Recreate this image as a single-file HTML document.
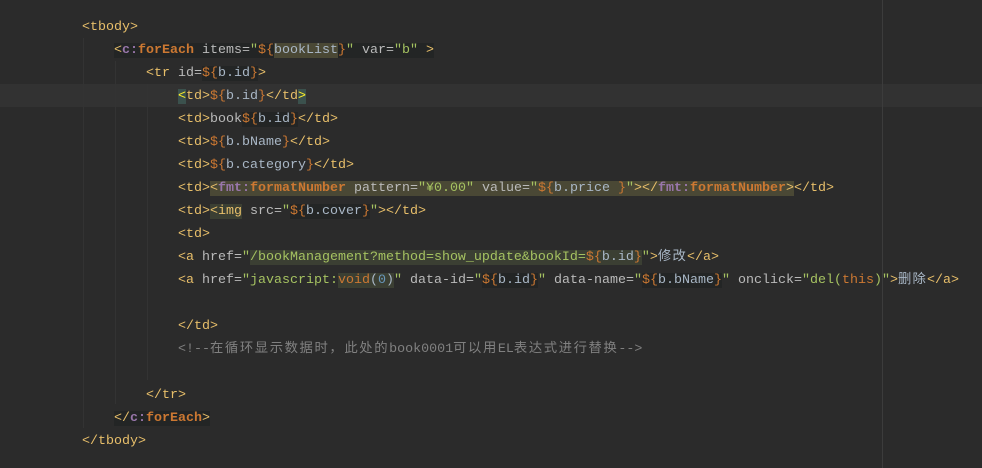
<!DOCTYPE html>
<html><head><meta charset="utf-8"><style>
html,body{margin:0;padding:0;background:#2b2b2b;width:982px;height:468px;overflow:hidden;position:relative}
pre{margin:0;position:absolute;left:82px;top:16px;font-family:"Liberation Mono","Noto Sans CJK SC",monospace;font-size:13.33px;line-height:23px;color:#a9b7c6}
.cl{position:absolute;left:0;width:982px;top:84px;height:23px;background:#323232}
.rm{position:absolute;left:882px;top:0;width:1px;height:468px;background:#3c3c3c}
.g{position:absolute;width:1px;background:#333}
.t{color:#e8bf6a}.a{color:#bababa}.s{color:#a5c261}.o{color:#cc7832}.p{color:#9876aa}
.b{font-weight:bold}.c{color:#808080}.el{background:#232525}.hl{background:#4a4835}.hm{background:#3b3f33}
.k{letter-spacing:1.2px}.kc{letter-spacing:1.6px}
.br{background:#3b514d;color:#ffef28}
</style></head><body>
<div class="cl"></div><div class="rm"></div>
<div class="g" style="left:83px;top:38px;height:390px"></div>
<div class="g" style="left:115px;top:61px;height:343px"></div>
<div class="g" style="left:147px;top:84px;height:296px"></div>
<pre><span class="t">&lt;tbody&gt;</span>
    <span class="el"><span class="t">&lt;</span><span class="p b">c:</span><span class="o b">forEach</span> <span class="a">items=</span><span class="s">"</span><span class="o">${</span><span class="hl">bookList</span><span class="o">}</span><span class="s">"</span> <span class="a">var=</span><span class="s">"b"</span> <span class="t">&gt;</span></span>
        <span class="t">&lt;tr</span> <span class="a">id=</span><span class="el"><span class="o">${</span>b.id<span class="o">}</span></span><span class="t">&gt;</span>
            <span class="t"><span class="br">&lt;</span>td&gt;</span><span class="o">${</span>b.id<span class="o">}</span><span class="t">&lt;/td<span class="br">&gt;</span></span>
            <span class="t">&lt;td&gt;</span><span class="a">book</span><span class="el"><span class="o">${</span>b.id<span class="o">}</span></span><span class="t">&lt;/td&gt;</span>
            <span class="t">&lt;td&gt;</span><span class="o">${</span>b.bName<span class="o">}</span><span class="t">&lt;/td&gt;</span>
            <span class="t">&lt;td&gt;</span><span class="o">${</span>b.category<span class="o">}</span><span class="t">&lt;/td&gt;</span>
            <span class="t">&lt;td&gt;</span><span class="hl"><span class="t">&lt;</span><span class="p b">fmt:</span><span class="o b">formatNumber</span> <span class="a">pattern=</span><span class="s">"¥0.00"</span> <span class="a">value=</span><span class="s">"</span><span class="o">${</span>b.price <span class="o">}</span><span class="s">"</span><span class="t">&gt;&lt;/</span><span class="p b">fmt:</span><span class="o b">formatNumber</span><span class="t">&gt;</span></span><span class="t">&lt;/td&gt;</span>
            <span class="t">&lt;td&gt;</span><span class="hm"><span class="t">&lt;img</span></span> <span class="a">src=</span><span class="s">"</span><span class="el"><span class="o">${</span>b.cover<span class="o">}</span></span><span class="s">"</span><span class="t">&gt;&lt;/td&gt;</span>
            <span class="t">&lt;td&gt;</span>
            <span class="t">&lt;a</span> <span class="a">href=</span><span class="s">"</span><span class="hm"><span class="s">/bookManagement?method=show_update&amp;bookId=</span><span class="o">${</span>b.id<span class="o">}</span></span><span class="s">"</span><span class="t">&gt;</span><span class="k">修改</span><span class="t">&lt;/a&gt;</span>
            <span class="t">&lt;a</span> <span class="a">href=</span><span class="s">"javascript:</span><span class="hm"><span class="o">void</span>(<span class="s" style="color:#6897bb">0</span>)</span><span class="s">"</span> <span class="a">data-id=</span><span class="s">"</span><span class="el"><span class="o">${</span>b.id<span class="o">}</span></span><span class="s">"</span> <span class="a">data-name=</span><span class="s">"</span><span class="el"><span class="o">${</span>b.bName<span class="o">}</span></span><span class="s">"</span> <span class="a">onclick=</span><span class="s">"del(</span><span class="o">this</span><span class="s">)"</span><span class="t">&gt;</span><span class="k">删除</span><span class="t">&lt;/a&gt;</span>

            <span class="t">&lt;/td&gt;</span>
            <span class="c">&lt;!--<span class="kc">在循环显示数据时，此处的</span>book0001<span class="kc">可以用</span>EL<span class="kc">表达式进行替换</span>--&gt;</span>

        <span class="t">&lt;/tr&gt;</span>
    <span class="el"><span class="t">&lt;/</span><span class="p b">c:</span><span class="o b">forEach</span><span class="t">&gt;</span></span>
<span class="t">&lt;/tbody&gt;</span></pre>
</body></html>
